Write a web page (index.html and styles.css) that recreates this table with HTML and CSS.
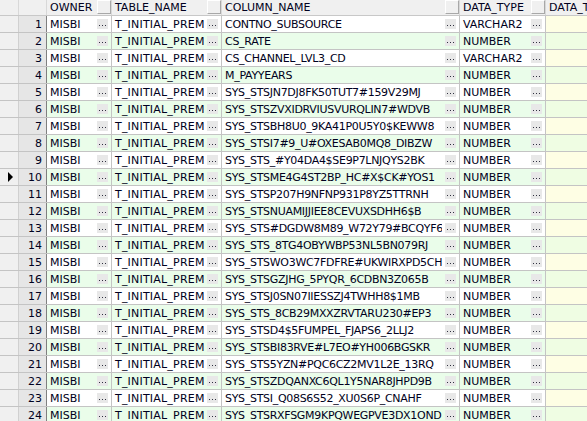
FILE: index.html
```html
<!DOCTYPE html>
<html>
<head>
<meta charset="utf-8">
<link rel="stylesheet" href="styles.css">
</head>
<body>
<div class="grid">
  <div class="row head">
    <div class="c ind"></div>
    <div class="c num"></div>
    <div class="c owner"><span class="t">OWNER</span><span class="hb"></span></div>
    <div class="c tname"><span class="t">TABLE_NAME</span><span class="hb"></span></div>
    <div class="c cname"><span class="t">COLUMN_NAME</span><span class="hb"></span></div>
    <div class="c dtype"><span class="t">DATA_TYPE</span><span class="hb"></span></div>
    <div class="c last"><span class="t">DATA_TYPE_MOD</span></div>
  </div>
</div>
<script src="app.js"></script>
</body>
</html>
```

FILE: app.js
```js
const cols = [
  "CONTNO_SUBSOURCE","CS_RATE","CS_CHANNEL_LVL3_CD","M_PAYYEARS",
  "SYS_STSJN7DJ8FK50TUT7#159V29MJ","SYS_STSZVXIDRVIUSVURQLIN7#WDVB",
  "SYS_STSBH8U0_9KA41P0U5Y0$KEWW8","SYS_STSI7#9_U#OXESAB0MQ8_DIBZW",
  "SYS_STS_#Y04DA4$SE9P7LNJQYS2BK","SYS_STSME4G4ST2BP_HC#X$CK#YOS1",
  "SYS_STSP207H9NFNP931P8YZ5TTRNH","SYS_STSNUAMIJJIEE8CEVUXSDHH6$B",
  "SYS_STS#DGDW8M89_W72Y79#BCQYF6","SYS_STS_8TG4OBYWBP53NL5BN079RJ",
  "SYS_STSWO3WC7FDFRE#UKWIRXPD5CH","SYS_STSGZJHG_5PYQR_6CDBN3Z065B",
  "SYS_STSJ0SN07IIESSZJ4TWHH8$1MB","SYS_STS_8CB29MXXZRVTARU230#EP3",
  "SYS_STSD4$5FUMPEL_FJAPS6_2LLJ2","SYS_STSBI83RVE#L7EO#YH006BGSKR",
  "SYS_STS5YZN#PQC6CZ2MV1L2E_13RQ","SYS_STSZDQANXC6QL1Y5NAR8JHPD9B",
  "SYS_STSI_Q08S6S52_XU0S6P_CNAHF","SYS_STSRXFSGM9KPQWEGPVE3DX1OND"
];
const grid = document.querySelector('.grid');
const eb = '<span class="eb"><i></i><i></i><i></i></span>';
cols.forEach((c, i) => {
  const n = i + 1;
  const type = (n === 1 || n === 3) ? 'VARCHAR2' : 'NUMBER';
  const row = document.createElement('div');
  row.className = 'row ' + (n % 2 === 0 ? 'even' : 'odd');
  row.innerHTML =
    '<div class="c ind">' + (n === 10 ? '<span class="arrow"></span>' : '') + '</div>' +
    '<div class="c num">' + n + '</div>' +
    '<div class="c owner"><span class="t">MISBI</span>' + eb + '</div>' +
    '<div class="c tname"><span class="t">T_INITIAL_PREMIUM</span>' + eb + '</div>' +
    '<div class="c cname"><span class="t">' + c + '</span>' + eb + '</div>' +
    '<div class="c dtype"><span class="t">' + type + '</span>' + eb + '</div>' +
    '<div class="c last"></div>';
  grid.appendChild(row);
});
```

FILE: styles.css
```css
html, body {
  margin: 0;
  padding: 0;
  background: #ffffff;
  overflow: hidden;
}
.grid {
  width: 587px;
  height: 421px;
  overflow: hidden;
  font-family: "DejaVu Sans", sans-serif;
  font-size: 11px;
  color: #000020;
}
.row {
  display: flex;
  height: 17px;
  box-sizing: border-box;
  border-bottom: 1px solid #c4c4c4;
}
.row.head {
  height: 16px;
  background: #f0f0f0;
  border-bottom: 1px solid #c8c8c8;
}
.c {
  box-sizing: border-box;
  border-right: 1px solid #c4c4c4;
  display: flex;
  align-items: center;
  overflow: hidden;
  white-space: nowrap;
  flex: none;
}
.t {
  flex: 1;
  min-width: 0;
  overflow: hidden;
  padding-left: 3px;
  margin-right: 3px;
  line-height: 16px;
  padding-top: 1px;
}
.head .t { padding-top: 0; margin-right: 0; }
.ind { width: 19px; background: #f0f0f0; border-right-color: #d0d0d0; }
.num {
  width: 28px;
  background: #e6e6e6;
  border-right: 1px solid #808080;
  justify-content: flex-end;
  padding-right: 4px;
  padding-top: 1px;
}
.owner { width: 65px; }
.tname { width: 110px; }
.tname .t { letter-spacing: 0.2px; }
.head .tname .t { letter-spacing: 0; }
.cname { width: 238px; }
.cname .t { letter-spacing: -0.3px; }
.head .cname .t { letter-spacing: 0; }
.dtype { width: 86px; }
.last { flex: 1; border-right: none; }
.head .c { border-right-color: #d8d8d8; }
.head .ind, .head .num { background: #f0f0f0; border-right: 1px solid #d8d8d8; }
.hb {
  width: 14px;
  height: 14px;
  align-self: flex-start;
  box-sizing: border-box;
  background: #f0f0f0;
  border-left: 1px solid #ffffff;
  border-top: 1px solid #ffffff;
  border-right: 1px solid #a8a8a8;
  border-bottom: 1px solid #a8a8a8;
  flex: none;
}
.eb {
  flex: none;
  width: 11px;
  height: 10px;
  margin-right: 3px;
  background: #e8e8e8;
  box-sizing: border-box;
  display: flex;
  align-items: flex-end;
  justify-content: center;
  gap: 2px;
  padding-bottom: 3px;
}
.eb i {
  display: block;
  width: 1px;
  height: 1px;
  background: #303040;
}
.odd .owner, .odd .tname, .odd .cname, .odd .dtype { background: #ffffff; }
.even .owner, .even .tname, .even .cname, .even .dtype { background: #eafdea; }
.odd .last { background: #fefee4; }
.even .last { background: #effde3; }
.arrow {
  margin-left: 8px;
  width: 0;
  height: 0;
  border-top: 5px solid transparent;
  border-bottom: 5px solid transparent;
  border-left: 5px solid #000000;
}
```
